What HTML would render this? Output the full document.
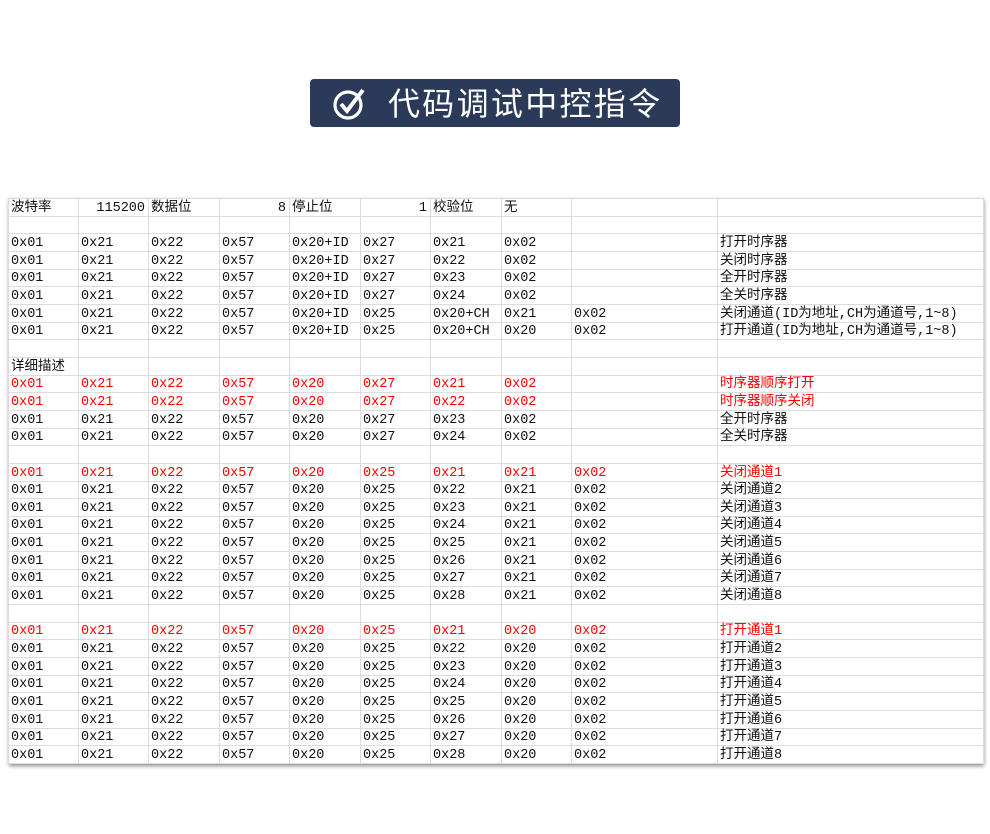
<!DOCTYPE html>
<html><head><meta charset="utf-8"><style>
body{margin:0;width:990px;height:834px;background:#fff;position:relative;overflow:hidden;font-family:"Liberation Sans","Noto Sans CJK SC",sans-serif}
.banner{position:absolute;left:310px;top:79px;width:370px;height:48px;background:#2b3a59;border-radius:4px;color:#fff;font-size:32px;line-height:48px;font-family:"Noto Sans CJK SC",sans-serif;font-weight:400}
.banner svg{position:absolute;left:22px;top:8px}
.banner span{position:absolute;left:78px;top:-1px;letter-spacing:2.3px}
.wrap{position:absolute;left:8px;top:198px;width:975px;box-shadow:1px 2px 4px rgba(0,0,0,.45);background:#fff}
table{border-collapse:collapse;table-layout:fixed;width:975px}
td{height:16.66px;border:1px solid #dcdcdc;padding:0 0 0 2px;font-size:13.5px;line-height:15px;white-space:nowrap;overflow:visible;color:#111;font-family:"Liberation Mono","Noto Sans CJK SC",monospace;vertical-align:bottom}
td.r{text-align:right;padding-right:3px}
tr.red td{color:#f00}
tr{height:17.66px}
</style></head><body>
<div class="banner"><svg width="34" height="34" viewBox="0 0 34 34"><circle cx="16" cy="18" r="13" fill="none" stroke="#fff" stroke-width="3.2"/><path d="M9 17l6 7 L31 3" fill="none" stroke="#fff" stroke-width="4" stroke-linejoin="miter"/></svg><span>代码调试中控指令</span></div>
<div class="wrap"><table>
<colgroup><col style="width:70px"><col style="width:70px"><col style="width:71px"><col style="width:70px"><col style="width:71px"><col style="width:70px"><col style="width:71px"><col style="width:70px"><col style="width:146px"><col style="width:266px"></colgroup>
<tr><td>波特率</td><td class="r">115200</td><td>数据位</td><td class="r">8</td><td>停止位</td><td class="r">1</td><td>校验位</td><td>无</td><td></td><td></td></tr>
<tr><td></td><td></td><td></td><td></td><td></td><td></td><td></td><td></td><td></td><td></td></tr>
<tr><td>0x01</td><td>0x21</td><td>0x22</td><td>0x57</td><td>0x20+ID</td><td>0x27</td><td>0x21</td><td>0x02</td><td></td><td>打开时序器</td></tr>
<tr><td>0x01</td><td>0x21</td><td>0x22</td><td>0x57</td><td>0x20+ID</td><td>0x27</td><td>0x22</td><td>0x02</td><td></td><td>关闭时序器</td></tr>
<tr><td>0x01</td><td>0x21</td><td>0x22</td><td>0x57</td><td>0x20+ID</td><td>0x27</td><td>0x23</td><td>0x02</td><td></td><td>全开时序器</td></tr>
<tr><td>0x01</td><td>0x21</td><td>0x22</td><td>0x57</td><td>0x20+ID</td><td>0x27</td><td>0x24</td><td>0x02</td><td></td><td>全关时序器</td></tr>
<tr><td>0x01</td><td>0x21</td><td>0x22</td><td>0x57</td><td>0x20+ID</td><td>0x25</td><td>0x20+CH</td><td>0x21</td><td>0x02</td><td>关闭通道(ID为地址,CH为通道号,1~8)</td></tr>
<tr><td>0x01</td><td>0x21</td><td>0x22</td><td>0x57</td><td>0x20+ID</td><td>0x25</td><td>0x20+CH</td><td>0x20</td><td>0x02</td><td>打开通道(ID为地址,CH为通道号,1~8)</td></tr>
<tr><td></td><td></td><td></td><td></td><td></td><td></td><td></td><td></td><td></td><td></td></tr>
<tr><td>详细描述</td><td></td><td></td><td></td><td></td><td></td><td></td><td></td><td></td><td></td></tr>
<tr class="red"><td>0x01</td><td>0x21</td><td>0x22</td><td>0x57</td><td>0x20</td><td>0x27</td><td>0x21</td><td>0x02</td><td></td><td>时序器顺序打开</td></tr>
<tr class="red"><td>0x01</td><td>0x21</td><td>0x22</td><td>0x57</td><td>0x20</td><td>0x27</td><td>0x22</td><td>0x02</td><td></td><td>时序器顺序关闭</td></tr>
<tr><td>0x01</td><td>0x21</td><td>0x22</td><td>0x57</td><td>0x20</td><td>0x27</td><td>0x23</td><td>0x02</td><td></td><td>全开时序器</td></tr>
<tr><td>0x01</td><td>0x21</td><td>0x22</td><td>0x57</td><td>0x20</td><td>0x27</td><td>0x24</td><td>0x02</td><td></td><td>全关时序器</td></tr>
<tr><td></td><td></td><td></td><td></td><td></td><td></td><td></td><td></td><td></td><td></td></tr>
<tr class="red"><td>0x01</td><td>0x21</td><td>0x22</td><td>0x57</td><td>0x20</td><td>0x25</td><td>0x21</td><td>0x21</td><td>0x02</td><td>关闭通道1</td></tr>
<tr><td>0x01</td><td>0x21</td><td>0x22</td><td>0x57</td><td>0x20</td><td>0x25</td><td>0x22</td><td>0x21</td><td>0x02</td><td>关闭通道2</td></tr>
<tr><td>0x01</td><td>0x21</td><td>0x22</td><td>0x57</td><td>0x20</td><td>0x25</td><td>0x23</td><td>0x21</td><td>0x02</td><td>关闭通道3</td></tr>
<tr><td>0x01</td><td>0x21</td><td>0x22</td><td>0x57</td><td>0x20</td><td>0x25</td><td>0x24</td><td>0x21</td><td>0x02</td><td>关闭通道4</td></tr>
<tr><td>0x01</td><td>0x21</td><td>0x22</td><td>0x57</td><td>0x20</td><td>0x25</td><td>0x25</td><td>0x21</td><td>0x02</td><td>关闭通道5</td></tr>
<tr><td>0x01</td><td>0x21</td><td>0x22</td><td>0x57</td><td>0x20</td><td>0x25</td><td>0x26</td><td>0x21</td><td>0x02</td><td>关闭通道6</td></tr>
<tr><td>0x01</td><td>0x21</td><td>0x22</td><td>0x57</td><td>0x20</td><td>0x25</td><td>0x27</td><td>0x21</td><td>0x02</td><td>关闭通道7</td></tr>
<tr><td>0x01</td><td>0x21</td><td>0x22</td><td>0x57</td><td>0x20</td><td>0x25</td><td>0x28</td><td>0x21</td><td>0x02</td><td>关闭通道8</td></tr>
<tr><td></td><td></td><td></td><td></td><td></td><td></td><td></td><td></td><td></td><td></td></tr>
<tr class="red"><td>0x01</td><td>0x21</td><td>0x22</td><td>0x57</td><td>0x20</td><td>0x25</td><td>0x21</td><td>0x20</td><td>0x02</td><td>打开通道1</td></tr>
<tr><td>0x01</td><td>0x21</td><td>0x22</td><td>0x57</td><td>0x20</td><td>0x25</td><td>0x22</td><td>0x20</td><td>0x02</td><td>打开通道2</td></tr>
<tr><td>0x01</td><td>0x21</td><td>0x22</td><td>0x57</td><td>0x20</td><td>0x25</td><td>0x23</td><td>0x20</td><td>0x02</td><td>打开通道3</td></tr>
<tr><td>0x01</td><td>0x21</td><td>0x22</td><td>0x57</td><td>0x20</td><td>0x25</td><td>0x24</td><td>0x20</td><td>0x02</td><td>打开通道4</td></tr>
<tr><td>0x01</td><td>0x21</td><td>0x22</td><td>0x57</td><td>0x20</td><td>0x25</td><td>0x25</td><td>0x20</td><td>0x02</td><td>打开通道5</td></tr>
<tr><td>0x01</td><td>0x21</td><td>0x22</td><td>0x57</td><td>0x20</td><td>0x25</td><td>0x26</td><td>0x20</td><td>0x02</td><td>打开通道6</td></tr>
<tr><td>0x01</td><td>0x21</td><td>0x22</td><td>0x57</td><td>0x20</td><td>0x25</td><td>0x27</td><td>0x20</td><td>0x02</td><td>打开通道7</td></tr>
<tr><td>0x01</td><td>0x21</td><td>0x22</td><td>0x57</td><td>0x20</td><td>0x25</td><td>0x28</td><td>0x20</td><td>0x02</td><td>打开通道8</td></tr>
</table></div>
</body></html>
